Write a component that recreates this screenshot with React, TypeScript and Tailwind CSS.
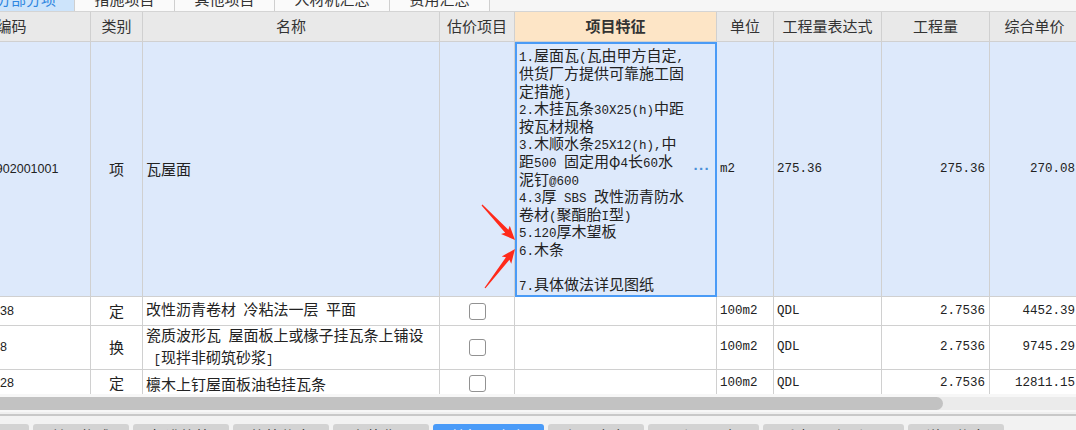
import React from "react";

const mono = "font-['Liberation_Mono',monospace] text-[12.5px] whitespace-pre";
const cols = "grid grid-cols-[158px_52px_297px_75px_202px_57px_108px_108px_90px]";
const cell = "border-r border-b border-[#d0d0d0] flex items-center";

// ascii runs get the narrow mono font, the rest stays in the CJK font
function Mixed({ text }: { text: string }) {
  const parts = text.split(/([\x20-\x7e]+)/).filter(Boolean);
  return (
    <>
      {parts.map((p, i) =>
        /^[\x20-\x7e]+$/.test(p) ? (
          <span key={i} className={mono}>
            {p}
          </span>
        ) : (
          <span key={i}>{p}</span>
        )
      )}
    </>
  );
}

const features = [
  "1.屋面瓦(瓦由甲方自定,",
  "供货厂方提供可靠施工固",
  "定措施)",
  "2.木挂瓦条30X25(h)中距",
  "按瓦材规格",
  "3.木顺水条25X12(h),中",
  "距500 固定用φ4长60水",
  "泥钉@600",
  "4.3厚 SBS 改性沥青防水",
  "卷材(聚酯胎I型)",
  "5.120厚木望板",
  "6.木条",
  "",
  "7.具体做法详见图纸",
];

const headers = ["编码", "类别", "名称", "估价项目", "项目特征", "单位", "工程量表达式", "工程量", "综合单价"];

const rows = [
  { code: "010902001001", type: "项", name: ["瓦屋面"], unit: "m2", expr: "275.36", qty: "275.36", price: "270.08", check: false, h: "h-[255px] bg-[#dde9fb]", main: true },
  { code: "10-138", type: "定", name: ["改性沥青卷材 冷粘法一层 平面"], unit: "100m2", expr: "QDL", qty: "2.7536", price: "4452.39", check: true, h: "h-[29px] bg-white", main: false },
  { code: "10-58", type: "换", name: ["瓷质波形瓦 屋面板上或椽子挂瓦条上铺设", " [现拌非砌筑砂浆]"], unit: "100m2", expr: "QDL", qty: "2.7536", price: "9745.29", check: true, h: "h-[43px] bg-white", main: false },
  { code: "10-128", type: "定", name: ["檩木上钉屋面板油毡挂瓦条"], unit: "100m2", expr: "QDL", qty: "2.7536", price: "12811.15", check: true, h: "h-[30px] bg-white", main: false },
];

const topTabs = [
  { label: "分部分项", w: "w-[97px] -ml-[22px]", active: true },
  { label: "措施项目", w: "w-[100px]", active: false },
  { label: "其他项目", w: "w-[100px]", active: false },
  { label: "人材机汇总", w: "w-[115px]", active: false },
  { label: "费用汇总", w: "w-[100px]", active: false },
];

const bottomTabs = [
  { label: "工料机显示", w: "w-[96px] -ml-[67px]", active: false },
  { label: "单价构成", w: "w-[96px]", active: false },
  { label: "标准换算", w: "w-[96px]", active: false },
  { label: "换算信息", w: "w-[96px]", active: false },
  { label: "安装费用", w: "w-[96px]", active: false },
  { label: "特征及内容", w: "w-[111px]", active: true },
  { label: "组价方案", w: "w-[96px]", active: false },
  { label: "工程量明细", w: "w-[111px]", active: false },
  { label: "反查图形工程量", w: "w-[141px]", active: false },
  { label: "说明信息", w: "w-[96px]", active: false },
];

function Arrow({ x1, y1, x2, y2 }: { x1: number; y1: number; x2: number; y2: number }) {
  const len = Math.hypot(x2 - x1, y2 - y1);
  const ang = (Math.atan2(y2 - y1, x2 - x1) * 180) / Math.PI;
  const pts = `0,-0.6 ${len - 12},-2.2 ${len - 14},-6 ${len},0 ${len - 14},6 ${len - 12},2.2 0,0.6`;
  return <polygon points={pts} transform={`translate(${x1} ${y1}) rotate(${ang})`} fill="#ff2a1a" />;
}

function Checkbox() {
  return <div className="w-[17px] h-[17px] rounded-[3px] border border-[#929292] bg-white" />;
}

export default function App() {
  return (
    <div className="relative w-[1076px] h-[430px] overflow-hidden bg-[#f2f2f2] text-[15px] text-[#222] font-['Noto_Sans_CJK_SC',sans-serif]">
      {/* top tabs, mostly scrolled out of view */}
      <div className="flex h-[12px] bg-[#f6f6f6] border-b border-[#d4d4d4] overflow-hidden">
        {topTabs.map((t) => (
          <div
            key={t.label}
            className={`${t.w} shrink-0 h-full flex items-end justify-center pb-[5px] border-r border-[#cfcfcf] ${
              t.active ? "bg-[#cde4fb] text-[#2f86e0]" : "bg-[#fafafa] text-[#333]"
            }`}
          >
            <span className="leading-[15px] whitespace-nowrap">{t.label}</span>
          </div>
        ))}
      </div>

      <div className="-ml-[67px] w-[1147px]">
        <div className={`${cols} h-[30px] bg-[#e9e9e9] text-[#333]`}>
          {headers.map((h) => (
            <div
              key={h}
              className={`${cell} justify-center border-[#c9c9c9] whitespace-nowrap ${
                h === "项目特征" ? "bg-[#fde5c6] font-bold" : ""
              }`}
            >
              {h}
            </div>
          ))}
        </div>

        <div className="h-[352px] overflow-hidden">
          {rows.map((r) => (
            <div key={r.code} className={`${cols} ${r.h}`}>
              <div className={`${cell} pl-[42px] font-['Liberation_Sans',sans-serif] text-[12.5px]`}>{r.code}</div>
              <div className={`${cell} justify-center`}>{r.type}</div>
              <div className={`${cell} pl-[3px]`}>
                <div className="leading-[17.6px] whitespace-nowrap">
                  {r.name.map((n) => (
                    <div key={n}>
                      <Mixed text={n} />
                    </div>
                  ))}
                </div>
              </div>
              <div className={`${cell} justify-center`}>{r.check && <Checkbox />}</div>
              {r.main ? (
                <div className="flex items-center border-2 border-[#4a9bf6] pl-[2px] pr-[5px]">
                  <div className="flex-1 leading-[17.6px] whitespace-nowrap">
                    {features.map((f, i) => (
                      <div key={i} className="h-[17.6px]">
                        <Mixed text={f} />
                      </div>
                    ))}
                  </div>
                  <span className="text-[15px] font-bold text-[#4a8fd8] font-['Liberation_Sans',sans-serif] tracking-[0.5px]">···</span>
                </div>
              ) : (
                <div className={cell} />
              )}
              <div className={`${cell} pl-[3px] ${mono}`}>{r.unit}</div>
              <div className={`${cell} pl-[3px] ${mono}`}>{r.expr}</div>
              <div className={`${cell} justify-end pr-[4px] ${mono}`}>{r.qty}</div>
              <div className={`${cell} justify-end pr-[4px] ${mono}`}>{r.price}</div>
            </div>
          ))}
        </div>
      </div>

      {/* horizontal scrollbar */}
      <div className="h-[18px] pt-[3px] bg-[#f7f7f7]">
        <div className="h-[13px] bg-[#ebebeb]">
          <div className="h-full w-[943px] rounded-r-full bg-[#c2c2c2]" />
        </div>
      </div>
      <div className="h-[2px] bg-[#efefef]" />
      <div className="h-[2px] bg-[#c8c8c8]" />

      <div className="flex gap-[4px] pt-[8px] bg-[#f2f2f2]">
        {bottomTabs.map((t) => (
          <div
            key={t.label}
            className={`${t.w} shrink-0 h-[24px] rounded-t-[3px] flex items-center justify-center whitespace-nowrap ${
              t.active ? "bg-[#4a9bf8] text-white" : "bg-[#d3d3d3] text-[#333]"
            }`}
          >
            {t.label}
          </div>
        ))}
      </div>

      <svg className="absolute inset-0 pointer-events-none" width="1076" height="430">
        <Arrow x1={482} y1={205} x2={515} y2={240} />
        <Arrow x1={485} y1={288} x2={515} y2={249} />
      </svg>
    </div>
  );
}
